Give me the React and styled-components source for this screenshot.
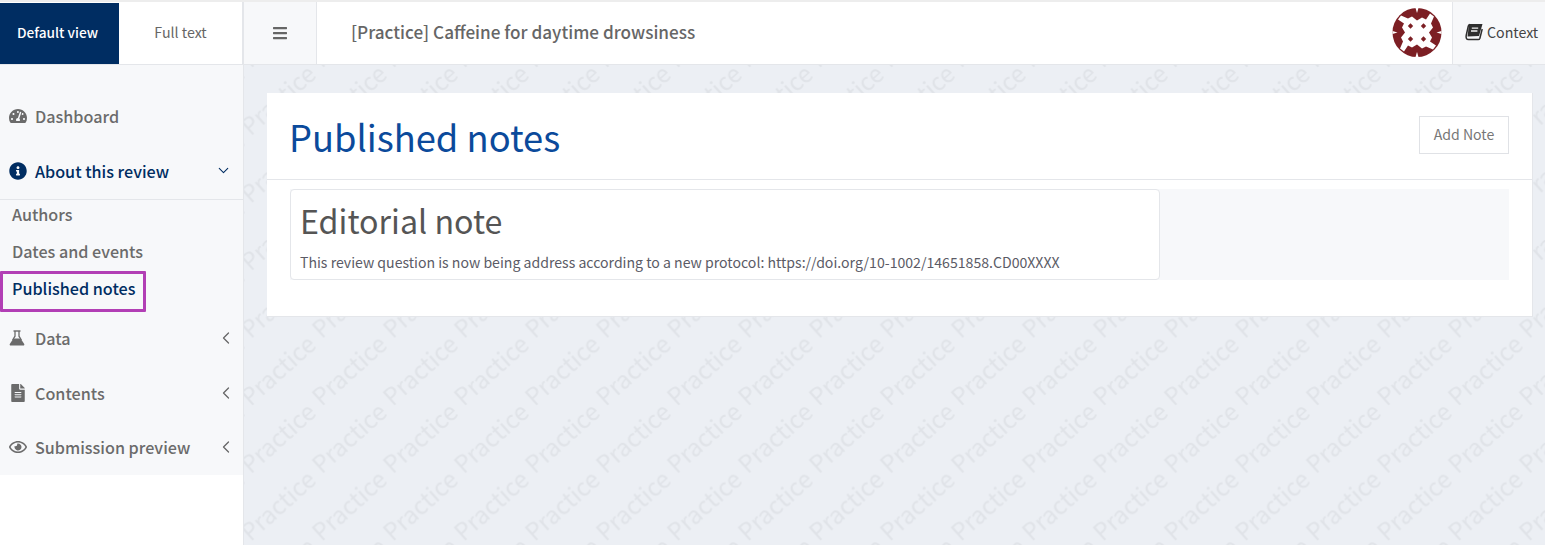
import React from 'react';
import styled, { createGlobalStyle } from 'styled-components';
import { FaTachometerAlt, FaInfoCircle, FaFileAlt, FaRegEye, FaBars } from 'react-icons/fa';
import { ChevronDown, ChevronLeft } from 'lucide-react';

const Global = createGlobalStyle`
  html, body { margin: 0; padding: 0; height: 100%; background: #fff; overflow: hidden; }
  body { font-family: "Noto Sans CJK SC", "Source Sans Pro", "Open Sans", sans-serif; }
  * { box-sizing: border-box; }
`;

const Page = styled.div`
  width: 1545px;
  height: 545px;
  display: flex;
  flex-direction: column;
  overflow: hidden;
`;

const TopBar = styled.header`
  height: 65px;
  flex: none;
  display: flex;
  background: #fff;
  border-top: 2px solid #ededed;
  border-bottom: 1px solid #e4e6ea;
`;

const ViewTabs = styled.div`
  width: 243px;
  flex: none;
  display: flex;
  border-right: 1px solid #e4e6ea;
`;

const ViewTab = styled.div`
  width: ${p => (p.$active ? '119px' : '123px')};
  margin-top: 1px;
  padding: 0 ${p => (p.$active ? '4px' : '0')} 3px 0;
  display: flex;
  align-items: center;
  justify-content: center;
  font-size: ${p => (p.$active ? '13.7px' : '14.2px')};
  font-weight: ${p => (p.$active ? 500 : 400)};
  color: ${p => (p.$active ? '#fff' : '#666')};
  background: ${p => (p.$active ? '#002d62' : '#fff')};
`;

const Toggle = styled.div`
  width: 74px;
  flex: none;
  padding: 0 1px 1px 0;
  display: flex;
  align-items: center;
  justify-content: center;
  background: #f7f8fa;
  color: #666;
  font-size: 16px;
  border-left: 1px solid #e4e6ea;
  border-right: 1px solid #e4e6ea;
`;

const Title = styled.div`
  flex: 1;
  padding: 0 0 3px 34px;
  display: flex;
  align-items: center;
  font-size: 17.15px;
  font-weight: 500;
  color: #666;
`;

const Logo = styled.svg`
  width: 50px;
  height: 50px;
  align-self: center;
  margin: 0 10px 3px 0;
  flex: none;
`;

const ContextButton = styled.div`
  width: 93px;
  flex: none;
  display: flex;
  align-items: center;
  gap: 4px;
  padding: 0 0 3px 12px;
  background: #f7f8fa;
  border-left: 1px solid #e4e6ea;
  color: #444;
  font-size: 14.2px;
`;

const BookIcon = styled.svg`
  width: 18px;
  height: 18px;
  flex: none;
`;

const Body = styled.div`
  flex: 1;
  min-height: 0;
  display: flex;
`;

const Sidebar = styled.aside`
  width: 244px;
  flex: none;
  background: #fff;
  border-right: 1px solid #e4e6ea;
`;

const SideInner = styled.nav`
  height: 410px;
  padding-top: 24px;
  background: #f7f8fa;
`;

const NavItem = styled.div`
  height: ${p => p.$h || 54.5}px;
  padding: 0 0 2px 9px;
  display: flex;
  align-items: center;
  font-size: 16.15px;
  font-weight: 500;
  color: ${p => (p.$open ? '#002d62' : '#6b6b6b')};
  ${p => p.$open && 'border-bottom: 1px solid #e4e6ea;'}
`;

const NavIcon = styled.span`
  width: 26px;
  flex: none;
  display: inline-flex;
  font-size: 18px;
`;

const NavLabel = styled.span`
  flex: 1;
`;

const Chevron = styled.span`
  display: inline-flex;
  margin-right: ${p => (p.$open ? '11.5px' : '7px')};
  color: ${p => (p.$open ? '#002d62' : '#666')};
`;

const SubItem = styled.div`
  height: 37px;
  padding: 2px 0 0 12px;
  line-height: 24px;
  font-size: 16.15px;
  font-weight: 500;
  color: #6b6b6b;
`;

const ActiveSubItem = styled.div`
  width: 146px;
  height: 41px;
  margin-top: -3px;
  padding: 0 0 7px 9px;
  display: flex;
  align-items: center;
  border: 3px solid #b23fb5;
  border-radius: 1px;
  font-size: 16.15px;
  font-weight: 500;
  color: #002d62;
`;

const Main = styled.main`
  position: relative;
  flex: 1;
  min-width: 0;
  background: #eceff4;
  padding: 28px 12px 0 23px;
`;

const Watermark = styled.svg`
  position: absolute;
  inset: 0;
  width: 100%;
  height: 100%;
`;

const Card = styled.section`
  position: relative;
  background: #fff;
  border-right: 1px solid #e4e6ea;
  border-bottom: 1px solid #e4e6ea;
  height: 224px;
`;

const CardHead = styled.div`
  height: 87px;
  padding: 0 23px;
  display: flex;
  align-items: center;
  justify-content: space-between;
  border-bottom: 1px solid #e4e6ea;
`;

const PageTitle = styled.h1`
  margin: 1px 0 0 -1px;
  font-size: 36.3px;
  line-height: 1.2;
  font-weight: 400;
  color: #0b4a9b;
`;

const AddButton = styled.div`
  width: 90px;
  height: 38px;
  margin-top: -3px;
  padding-bottom: 2px;
  display: flex;
  align-items: center;
  justify-content: center;
  border: 1px solid #e0e2e6;
  font-size: 14.1px;
  color: #777;
`;

const NoteArea = styled.div`
  margin: 9px 23px 0;
  height: 91px;
  background: #f7f8fa;
`;

const Note = styled.article`
  width: 870px;
  height: 91px;
  padding: 9px 9px 0;
  background: #fff;
  border: 1px solid #e4e6ea;
  border-radius: 4px;
`;

const NoteTitle = styled.h2`
  margin: 0;
  font-size: 32.2px;
  line-height: 42px;
  font-weight: 400;
  color: #555;
`;

const NoteText = styled.p`
  margin: 11px 0 0;
  font-size: 14.1px;
  line-height: 20px;
  color: #5b5b66;
`;

const quadrant = [[0, -12], [5, -15], [9, -13], [13, -19], [17, -16], [14, -9], [16, -5]];
const rotate = ([x, y], n) => (n === 0 ? [x, y] : n === 1 ? [-y, x] : n === 2 ? [-x, -y] : [y, -x]);
const starPoints = [0, 1, 2, 3]
  .flatMap(n => quadrant.map(p => rotate(p, n)))
  .map(([x, y]) => `${25 + x},${25.5 + y}`)
  .join(' ');

const UniLogo = () => (
  <Logo viewBox="0 0 50 50">
    <circle cx="25" cy="25.5" r="24.5" fill="#7c1f24" />
    <polygon points={starPoints} fill="#fff" />
    {[0, 90, 180, 270].map(a => (
      <polygon key={a} points="23.5,1 26.5,1 25,6" fill="#fff" transform={`rotate(${a} 25 25.5)`} />
    ))}
    {[[18.5, 19], [31.5, 19], [18.5, 32], [31.5, 32]].map(([x, y]) => (
      <rect key={x + '-' + y} x={x - 1.9} y={y - 1.9} width="3.8" height="3.8" fill="#7c1f24" transform={`rotate(45 ${x} ${y})`} />
    ))}
  </Logo>
);

const Book = () => (
  <BookIcon viewBox="0 0 18 18">
    <path d="M5 1.5C4 1.5 3.6 2.2 3.3 3L1.2 12.5C0.8 14.6 1.4 16.6 3.6 16.6H13.2C14.2 16.6 14.6 16 14.9 15.2L17.2 6" fill="none" stroke="#2f2f2f" strokeWidth="1.5" />
    <polygon points="4,1 17.5,1 14,13 2.5,13.5" fill="#2f2f2f" />
    <path d="M6.8 5.2H13.2M6 8H12.4" stroke="#f2f2f2" strokeWidth="1.3" />
  </BookIcon>
);

const Flask = () => (
  <svg width="16" height="16" viewBox="0 0 16 16">
    <path d="M4.5 1H11.5" stroke="currentColor" strokeWidth="1.4" />
    <path d="M6 1V6.2L3.6 10M10 1V6.2L12.4 10" stroke="currentColor" strokeWidth="1.3" fill="none" />
    <path d="M4.4 8.6H11.6L15.2 14C15.6 14.8 15.2 15.6 14.3 15.6H1.7C0.8 15.6 0.4 14.8 0.8 14Z" fill="currentColor" />
  </svg>
);

const Mark = () => (
  <text x="0" y="0" fontSize="24" fill="#e0e3e8" fontFamily="'Noto Sans CJK SC', sans-serif" transform="rotate(-42)">Practice</text>
);

const tileOffsets = [[0, 67.6], [0, 135.2], [71, 67.6], [71, 135.2], [71, 0], [142, 0], [142, 67.6]];

export default function App() {
  return (
    <Page>
      <Global />
      <TopBar>
        <ViewTabs>
          <ViewTab $active>Default view</ViewTab>
          <ViewTab>Full text</ViewTab>
        </ViewTabs>
        <Toggle><FaBars /></Toggle>
        <Title>[Practice] Caffeine for daytime drowsiness</Title>
        <UniLogo />
        <ContextButton><Book />Context</ContextButton>
      </TopBar>
      <Body>
        <Sidebar>
          <SideInner>
            <NavItem $h={55}>
              <NavIcon><FaTachometerAlt /></NavIcon>
              <NavLabel>Dashboard</NavLabel>
            </NavItem>
            <NavItem $open $h={56}>
              <NavIcon><FaInfoCircle /></NavIcon>
              <NavLabel>About this review</NavLabel>
              <Chevron $open><ChevronDown size={17} strokeWidth={1.5} /></Chevron>
            </NavItem>
            <SubItem>Authors</SubItem>
            <SubItem>Dates and events</SubItem>
            <ActiveSubItem>Published notes</ActiveSubItem>
            <NavItem>
              <NavIcon><Flask /></NavIcon>
              <NavLabel>Data</NavLabel>
              <Chevron><ChevronLeft size={20} strokeWidth={1.5} /></Chevron>
            </NavItem>
            <NavItem>
              <NavIcon><FaFileAlt /></NavIcon>
              <NavLabel>Contents</NavLabel>
              <Chevron><ChevronLeft size={20} strokeWidth={1.5} /></Chevron>
            </NavItem>
            <NavItem>
              <NavIcon><FaRegEye /></NavIcon>
              <NavLabel>Submission preview</NavLabel>
              <Chevron><ChevronLeft size={20} strokeWidth={1.5} /></Chevron>
            </NavItem>
          </SideInner>
        </Sidebar>
        <Main>
          <Watermark aria-hidden="true">
            <defs>
              <pattern id="wm" width="71" height="67.6" patternUnits="userSpaceOnUse" patternTransform="translate(6.7 4)">
                {tileOffsets.map(([x, y]) => (
                  <g key={x + '-' + y} transform={`translate(${x - 71} ${y})`}><Mark /></g>
                ))}
              </pattern>
            </defs>
            <rect width="100%" height="100%" fill="url(#wm)" />
          </Watermark>
          <Card>
            <CardHead>
              <PageTitle>Published notes</PageTitle>
              <AddButton>Add Note</AddButton>
            </CardHead>
            <NoteArea>
              <Note>
                <NoteTitle>Editorial note</NoteTitle>
                <NoteText>This review question is now being address according to a new protocol: https://doi.org/10-1002/14651858.CD00XXXX</NoteText>
              </Note>
            </NoteArea>
          </Card>
        </Main>
      </Body>
    </Page>
  );
}
